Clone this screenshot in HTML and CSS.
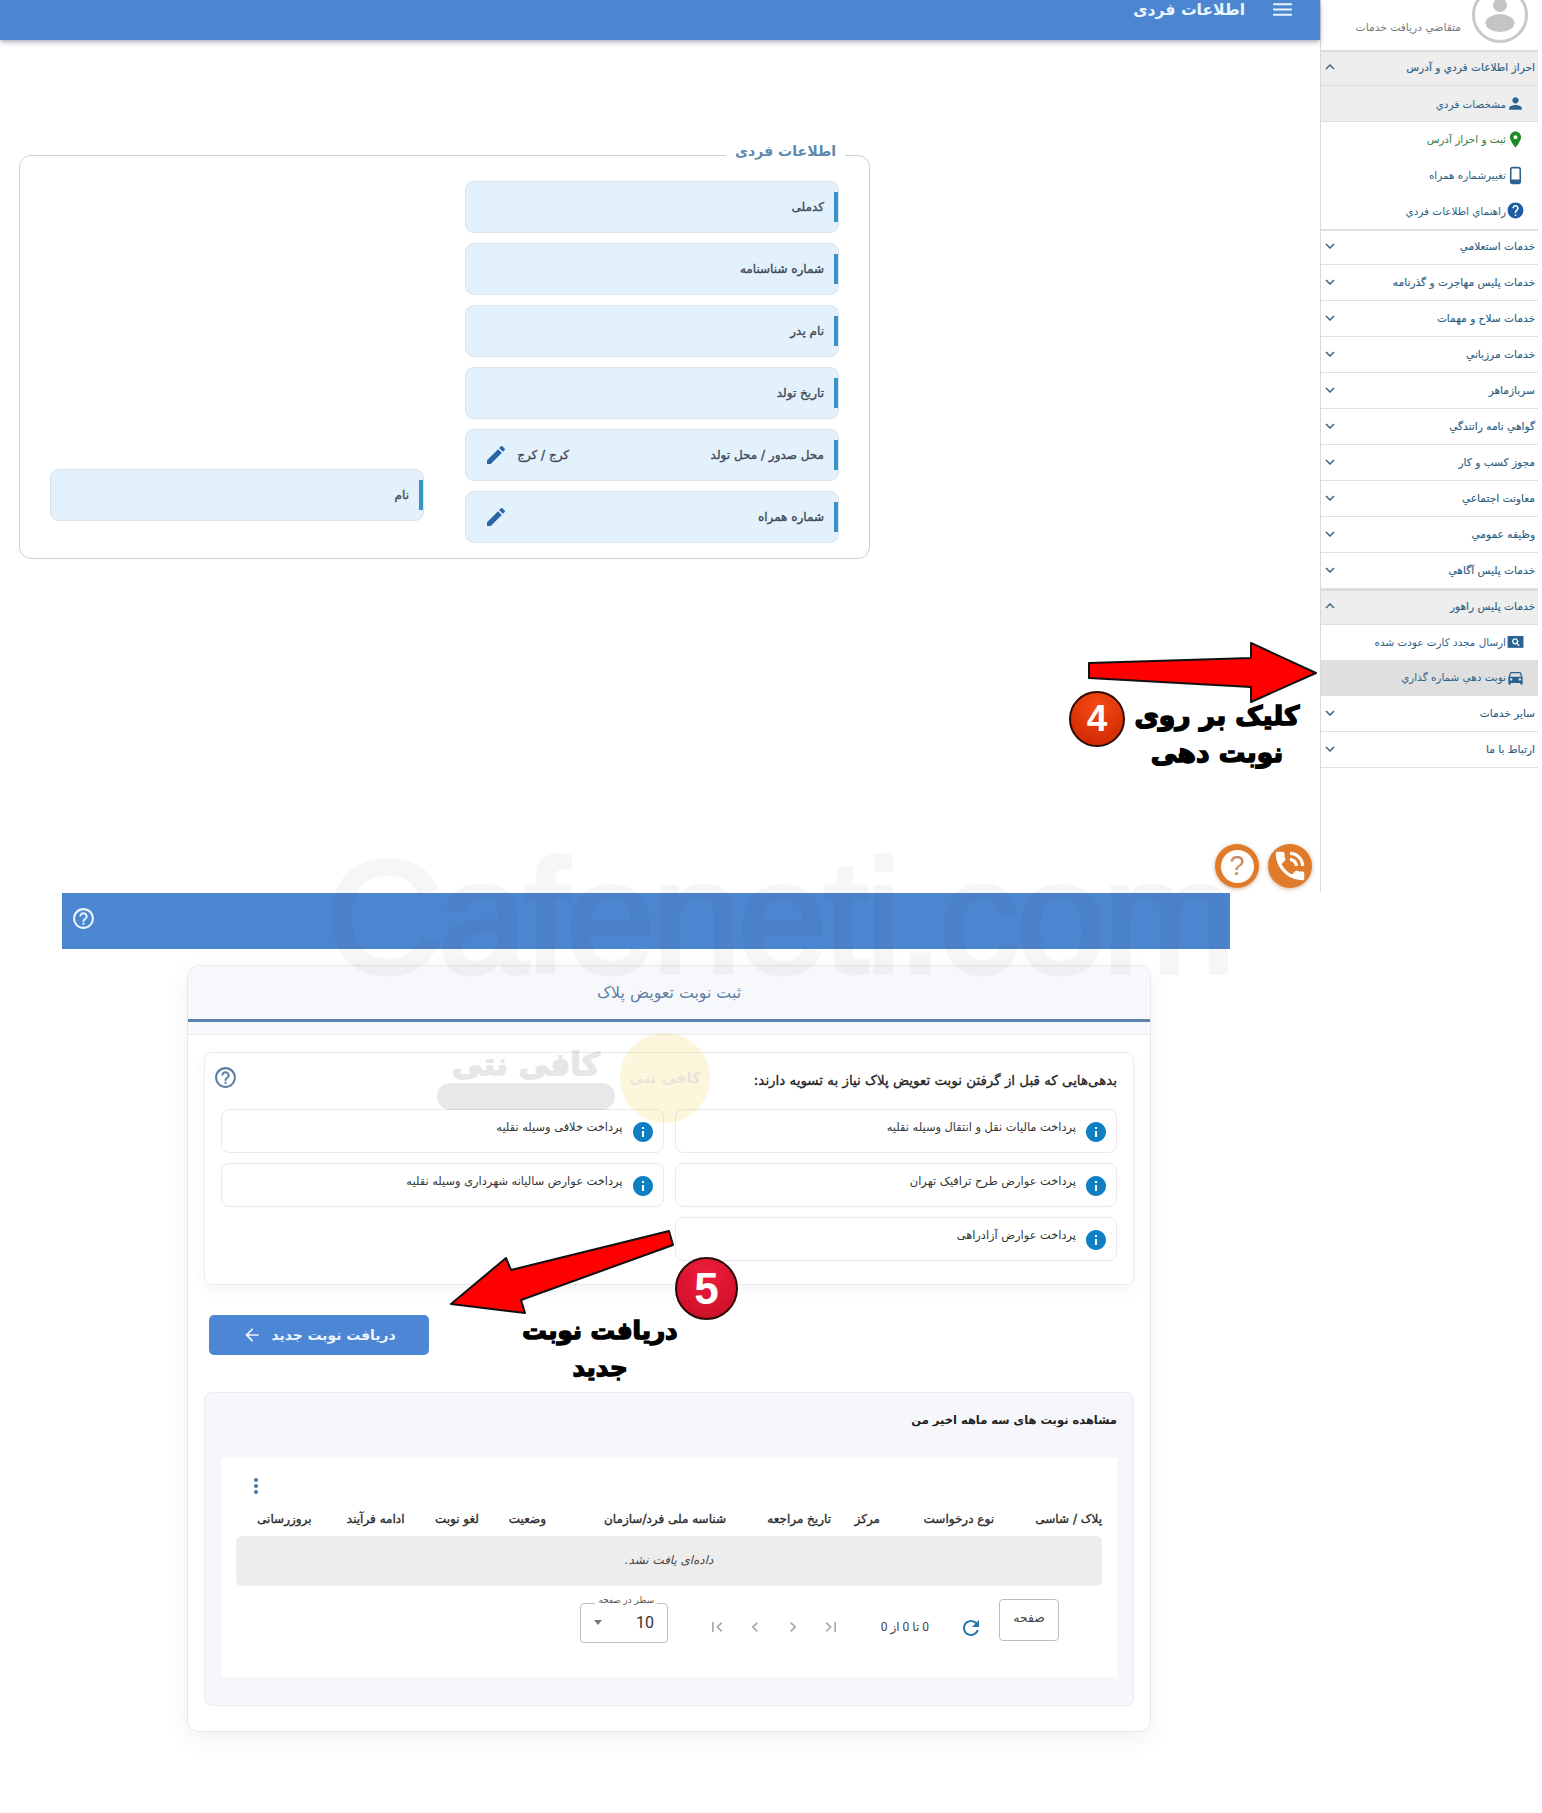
FILE: index.html
```html
<!DOCTYPE html>
<html lang="fa" dir="rtl">
<head>
<meta charset="utf-8">
<title>اطلاعات فردی</title>
<link rel="stylesheet" href="styles.css">
</head>
<body>
<svg class="defs" aria-hidden="true">
  <symbol id="i-person" viewBox="0 0 24 24"><path d="M12 12c2.21 0 4-1.79 4-4s-1.79-4-4-4-4 1.79-4 4 1.79 4 4 4zm0 2c-2.67 0-8 1.34-8 4v2h16v-2c0-2.66-5.33-4-8-4z"/></symbol>
  <symbol id="i-place" viewBox="0 0 24 24"><path d="M12 2C8.13 2 5 5.13 5 9c0 5.25 7 13 7 13s7-7.75 7-13c0-3.87-3.13-7-7-7zm0 9.5c-1.38 0-2.5-1.12-2.5-2.5s1.12-2.5 2.5-2.5 2.5 1.12 2.5 2.5-1.12 2.5-2.5 2.5z"/></symbol>
  <symbol id="i-mobile" viewBox="0 0 24 24"><path d="M16 1H8C6.34 1 5 2.34 5 4v16c0 1.66 1.34 3 3 3h8c1.66 0 3-1.34 3-3V4c0-1.66-1.34-3-3-3zm1 16H7V4c0-.55.45-1 1-1h8c.55 0 1 .45 1 1v13z"/></symbol>
  <symbol id="i-help" viewBox="0 0 24 24"><path d="M12 2C6.48 2 2 6.48 2 12s4.48 10 10 10 10-4.48 10-10S17.52 2 12 2zm1 17h-2v-2h2v2zm2.07-7.75l-.9.92C13.45 12.9 13 13.5 13 15h-2v-.5c0-1.1.45-2.1 1.17-2.83l1.24-1.26c.37-.36.59-.86.59-1.41 0-1.1-.9-2-2-2s-2 .9-2 2H8c0-2.21 1.79-4 4-4s4 1.79 4 4c0 .88-.36 1.68-.93 2.25z"/></symbol>
  <symbol id="i-search-box" viewBox="0 0 24 24"><path d="M2 5h20v15H2z"/><path fill="#fff" d="M11.5 7.8a4 4 0 0 1 3.2 6.4l2.6 2.6-1.1 1.1-2.6-2.6a4 4 0 1 1-2.1-7.5zm0 1.7a2.3 2.3 0 1 0 0 4.6 2.3 2.3 0 0 0 0-4.6z"/></symbol>
  <symbol id="i-car" viewBox="0 0 24 24"><path d="M18.92 6.01C18.72 5.42 18.16 5 17.5 5h-11c-.66 0-1.21.42-1.42 1.01L3 12v8c0 .55.45 1 1 1h1c.55 0 1-.45 1-1v-1h12v1c0 .55.45 1 1 1h1c.55 0 1-.45 1-1v-8l-2.08-5.99zM6.5 16c-.83 0-1.5-.67-1.5-1.5S5.67 13 6.5 13s1.5.67 1.5 1.5S7.33 16 6.5 16zm11 0c-.83 0-1.5-.67-1.5-1.5s.67-1.5 1.5-1.5 1.5.67 1.5 1.5-.67 1.5-1.5 1.5zM5 11l1.5-4.5h11L19 11H5z"/></symbol>
  <symbol id="i-down" viewBox="0 0 24 24"><path d="M16.59 8.59L12 13.17 7.41 8.59 6 10l6 6 6-6z"/></symbol>
  <symbol id="i-up" viewBox="0 0 24 24"><path d="M12 8l-6 6 1.41 1.41L12 10.83l4.59 4.58L18 14z"/></symbol>
  <symbol id="i-edit" viewBox="0 0 24 24"><path d="M3 17.25V21h3.75L17.81 9.94l-3.75-3.75L3 17.25zM20.71 7.04c.39-.39.39-1.02 0-1.41l-2.34-2.34a.9959.9959 0 0 0-1.41 0l-1.83 1.83 3.75 3.75 1.83-1.83z"/></symbol>
  <symbol id="i-help-o" viewBox="0 0 24 24"><path d="M11 18h2v-2h-2v2zm1-16C6.48 2 2 6.48 2 12s4.48 10 10 10 10-4.48 10-10S17.52 2 12 2zm0 18c-4.41 0-8-3.59-8-8s3.59-8 8-8 8 3.59 8 8-3.59 8-8 8zm0-14c-2.21 0-4 1.79-4 4h2c0-1.1.9-2 2-2s2 .9 2 2c0 2-3 1.75-3 5h2c0-2.25 3-2.5 3-5 0-2.21-1.79-4-4-4z"/></symbol>
  <symbol id="i-info" viewBox="0 0 24 24"><path d="M12 2C6.48 2 2 6.48 2 12s4.48 10 10 10 10-4.48 10-10S17.52 2 12 2zm1 15h-2v-6h2v6zm0-8h-2V7h2v2z"/></symbol>
  <symbol id="i-first" viewBox="0 0 24 24"><path d="M18.41 16.59L13.82 12l4.59-4.59L17 6l-6 6 6 6zM6 6h2v12H6z"/></symbol>
  <symbol id="i-last" viewBox="0 0 24 24"><path d="M5.59 7.41L10.18 12l-4.59 4.59L7 18l6-6-6-6zM16 6h2v12h-2z"/></symbol>
  <symbol id="i-prev" viewBox="0 0 24 24"><path d="M15.41 7.41L14 6l-6 6 6 6 1.41-1.41L10.83 12z"/></symbol>
  <symbol id="i-next" viewBox="0 0 24 24"><path d="M10 6L8.59 7.41 13.17 12l-4.58 4.59L10 18l6-6z"/></symbol>
</svg>

<div class="page">
  <section class="upper">
    <aside class="sidebar">
      <div class="profile">
        <svg class="avatar" viewBox="0 0 58 58"><circle cx="29" cy="29" r="26.5" fill="#fff" stroke="#c9c9c9" stroke-width="3"/><circle cx="29" cy="19" r="7" fill="#c4c4c4"/><ellipse cx="29" cy="37" rx="14.5" ry="9" fill="#c4c4c4"/></svg>
        <span class="profile-label">متقاضي دريافت خدمات</span>
      </div>
      <nav class="menu">
        <div class="group open"><span>احراز اطلاعات فردي و آدرس</span><svg class="chev"><use href="#i-up"/></svg></div>
        <div class="sub active"><svg class="sub-icon c-blue"><use href="#i-person"/></svg><span>مشخصات فردي</span></div>
        <div class="sub"><svg class="sub-icon c-green"><use href="#i-place"/></svg><span class="green">ثبت و احراز آدرس</span></div>
        <div class="sub"><svg class="sub-icon c-blue"><use href="#i-mobile"/></svg><span>تغييرشماره همراه</span></div>
        <div class="sub short"><svg class="sub-icon c-navy"><use href="#i-help"/></svg><span>راهنماي اطلاعات فردي</span></div>
        <div class="group after-sub"><span>خدمات استعلامي</span><svg class="chev"><use href="#i-down"/></svg></div>
        <div class="group"><span>خدمات پليس مهاجرت و گذرنامه</span><svg class="chev"><use href="#i-down"/></svg></div>
        <div class="group"><span>خدمات سلاح و مهمات</span><svg class="chev"><use href="#i-down"/></svg></div>
        <div class="group"><span>خدمات مرزباني</span><svg class="chev"><use href="#i-down"/></svg></div>
        <div class="group"><span>سربازماهر</span><svg class="chev"><use href="#i-down"/></svg></div>
        <div class="group"><span>گواهي نامه رانندگي</span><svg class="chev"><use href="#i-down"/></svg></div>
        <div class="group"><span>مجوز كسب و كار</span><svg class="chev"><use href="#i-down"/></svg></div>
        <div class="group"><span>معاونت اجتماعي</span><svg class="chev"><use href="#i-down"/></svg></div>
        <div class="group"><span>وظيفه عمومي</span><svg class="chev"><use href="#i-down"/></svg></div>
        <div class="group"><span>خدمات پليس آگاهي</span><svg class="chev"><use href="#i-down"/></svg></div>
        <div class="group open"><span>خدمات پليس راهور</span><svg class="chev"><use href="#i-up"/></svg></div>
        <div class="sub short"><svg class="sub-icon c-blue"><use href="#i-search-box"/></svg><span>ارسال مجدد كارت عودت شده</span></div>
        <div class="sub selected"><svg class="sub-icon c-blue"><use href="#i-car"/></svg><span>نوبت دهي شماره گذاري</span></div>
        <div class="group"><span>ساير خدمات</span><svg class="chev"><use href="#i-down"/></svg></div>
        <div class="group"><span>ارتباط با ما</span><svg class="chev"><use href="#i-down"/></svg></div>
      </nav>
    </aside>

    <main class="main">
      <header class="topbar">
        <svg class="burger" viewBox="0 0 24 24"><path d="M3 18h18v-2H3v2zm0-5h18v-2H3v2zm0-7v2h18V6H3z"/></svg>
        <h1 class="topbar-title">اطلاعات فردی</h1>
      </header>
      <div class="fieldset">
        <div class="legend">اطلاعات فردی</div>
        <div class="field-col">
          <div class="field"><i class="bar"></i><span class="label">کدملی</span></div>
          <div class="field"><i class="bar"></i><span class="label">شماره شناسنامه</span></div>
          <div class="field"><i class="bar"></i><span class="label">نام پدر</span></div>
          <div class="field"><i class="bar"></i><span class="label">تاریخ تولد</span></div>
          <div class="field"><i class="bar"></i><span class="label">محل صدور / محل تولد</span><span class="value">کرج / کرج</span><svg class="pencil"><use href="#i-edit"/></svg></div>
          <div class="field"><i class="bar"></i><span class="label">شماره همراه</span><span class="value"></span><svg class="pencil"><use href="#i-edit"/></svg></div>
        </div>
        <div class="field-col col-side">
          <div class="field"><i class="bar"></i><span class="label">نام</span></div>
        </div>
      </div>
      <div class="fabs">
        <span class="fab"><span class="fab-q">?</span></span>
        <span class="fab"><svg class="fab-phone" viewBox="0 0 24 24"><path d="M20 15.5c-1.25 0-2.45-.2-3.57-.57-.35-.11-.74-.03-1.02.24l-2.2 2.2c-2.83-1.44-5.15-3.75-6.59-6.59l2.2-2.21c.28-.26.36-.65.25-1C8.7 6.45 8.5 5.25 8.5 4c0-.55-.45-1-1-1H4c-.55 0-1 .45-1 1 0 9.39 7.61 17 17 17 .55 0 1-.45 1-1v-3.5c0-.55-.45-1-1-1zM19 12h2c0-4.97-4.03-9-9-9v2c3.87 0 7 3.13 7 7zm-4 0h2c0-2.76-2.24-5-5-5v2c1.66 0 3 1.34 3 3z"/></svg></span>
      </div>
    </main>
  </section>

  <section class="lower">
    <div class="banner"><svg class="banner-help"><use href="#i-help-o"/></svg></div>

    <div class="card">
      <div class="card-head"><h2 class="card-title">ثبت نوبت تعویض پلاک</h2></div>
      <div class="card-strip"></div>
      <div class="card-body">
        <div class="panel">
          <div class="panel-head">
            <p class="panel-title">بدهی‌هایی که قبل از گرفتن نوبت تعویض پلاک نیاز به تسویه دارند:</p>
            <svg class="panel-help"><use href="#i-help-o"/></svg>
          </div>
          <div class="debts">
            <div class="debt"><svg class="info"><use href="#i-info"/></svg><span>پرداخت مالیات نقل و انتقال وسیله نقلیه</span></div>
            <div class="debt"><svg class="info"><use href="#i-info"/></svg><span>پرداخت خلافی وسیله نقلیه</span></div>
            <div class="debt"><svg class="info"><use href="#i-info"/></svg><span>پرداخت عوارض طرح ترافیک تهران</span></div>
            <div class="debt"><svg class="info"><use href="#i-info"/></svg><span>پرداخت عوارض سالیانه شهرداری وسیله نقلیه</span></div>
            <div class="debt"><svg class="info"><use href="#i-info"/></svg><span>پرداخت عوارض آزادراهی</span></div>
          </div>
        </div>

        <div class="action-row">
          <button class="primary" type="button"><span>دریافت نوبت جدید</span><svg class="btn-arrow" viewBox="0 0 24 24"><path d="M20 11H7.83l5.59-5.59L12 4l-8 8 8 8 1.41-1.41L7.83 13H20v-2z"/></svg></button>
        </div>

        <div class="history">
          <h3 class="history-title">مشاهده نوبت های سه ماهه اخیر من</h3>
          <div class="table-box">
            <div class="kebab-row"><svg class="kebab" viewBox="0 0 24 24"><path d="M12 8c1.1 0 2-.9 2-2s-.9-2-2-2-2 .9-2 2 .9 2 2 2zm0 2c-1.1 0-2 .9-2 2s.9 2 2 2 2-.9 2-2-.9-2-2-2zm0 6c-1.1 0-2 .9-2 2s.9 2 2 2 2-.9 2-2-.9-2-2-2z"/></svg></div>
            <div class="thead">
              <span>پلاک / شاسی</span><span>نوع درخواست</span><span>مرکز</span><span>تاریخ مراجعه</span><span>شناسه ملی فرد/سازمان</span><span>وضعیت</span><span>لغو نوبت</span><span>ادامه فرآیند</span><span>بروزرسانی</span>
            </div>
            <div class="empty">داده‌ای یافت نشد.</div>
            <div class="pager">
              <span class="page-box">صفحه</span>
              <svg class="refresh" viewBox="0 0 24 24"><path d="M17.65 6.35C16.2 4.9 14.21 4 12 4c-4.42 0-7.99 3.58-7.99 8s3.57 8 7.99 8c3.73 0 6.84-2.55 7.73-6h-2.08c-.82 2.33-3.04 4-5.65 4-3.31 0-6-2.69-6-6s2.69-6 6-6c1.66 0 3.14.69 4.22 1.78L13 11h7V4l-2.35 2.35z"/></svg>
              <span class="range">0 تا 0 از 0</span>
              <svg class="pg pg-first"><use href="#i-last"/></svg>
              <svg class="pg"><use href="#i-next"/></svg>
              <svg class="pg"><use href="#i-prev"/></svg>
              <svg class="pg"><use href="#i-first"/></svg>
              <div class="select">
                <span class="select-label">سطر در صفحه</span>
                <span class="select-value">10</span>
                <i class="caret"></i>
              </div>
            </div>
          </div>
        </div>
      </div>
    </div>
  </section>

  <div class="watermark">Cafeneti.com</div>
  <div class="logo-mark">
    <span class="logo-name">کافی نتی</span>
    <span class="logo-pill"></span>
    <span class="logo-disc">کافی نتی</span>
  </div>

  <svg class="arrow arrow-four" viewBox="0 0 240 70"><polygon points="3,23 165,18 165,3 230,33 165,62 165,47 3,38" fill="#f00" stroke="#111" stroke-width="2" stroke-linejoin="round"/></svg>
  <span class="badge badge-four">4</span>
  <div class="note note-four">کلیک بر روی<br>نوبت دهی</div>

  <svg class="arrow arrow-five" viewBox="0 0 230 90"><polygon points="222,3 226,17 74,72 78,85 4,76 59,30 64,42" fill="#f00" stroke="#111" stroke-width="2" stroke-linejoin="round"/></svg>
  <span class="badge badge-five">5</span>
  <div class="note note-five">دریافت نوبت<br>جدید</div>
</div>
</body>
</html>
```
FILE: styles.css
```css
* { box-sizing: border-box; }
html, body { margin: 0; padding: 0; background: #fff; }
body { font-family: "DejaVu Sans", "Noto Sans", sans-serif; color: #333; }
.defs { display: none; }
svg { display: block; fill: currentColor; flex: none; }
h1, h2, h3, p { margin: 0; font-weight: inherit; font-size: inherit; }

.page { position: relative; width: 1542px; height: 1813px; overflow: hidden; }

/* upper */
.upper { display: flex; height: 892px; }
.sidebar { width: 218px; margin-inline-start: 4px; border-inline-end: 1px solid #d9d9d9; flex: none; }
.profile { height: 50px; display: flex; gap: 10px; overflow: hidden; padding-inline-start: 9px; }
.avatar { width: 58px; height: 58px; margin-top: -14px; }
.profile-label { font-size: 10.7px; color: #777; margin-top: 21px; }
.group { height: 36px; display: flex; align-items: center; justify-content: space-between; padding: 0 3px 1px 0; font-size: 10.6px; color: #2d5f86; border-bottom: 1px solid #dfdfdf; -webkit-text-stroke: .15px #2d5f86; }
.group.open { background: #eeeeee; border-top: 2px solid #dcdcdc; border-bottom: 1px solid #dcdcdc; padding-bottom: 4px; }
.group.after-sub { border-top: 2px solid #dfdfdf; padding-bottom: 4px; }
.chev { width: 18px; height: 18px; color: #3f5f78; }
.sub { height: 36px; display: flex; align-items: center; padding: 0 13px 2px 0; font-size: 10.4px; color: #2d5f86; }
.sub.short { height: 35px; }
.sub.active { background: #eeeeee; border-bottom: 1px solid #e2e2e2; padding-bottom: 0; }
.sub.selected { background: #dfdfdf; }
.sub-icon { width: 19px; height: 19px; }
.green { color: #2f7a3a; }
.c-blue { color: #2a6392; }
.c-green { color: #1f8a22; }
.c-navy { color: #1f5ca3; }

.main { position: relative; width: 1320px; flex: none; }
.topbar { height: 40px; background: #4d86d0; box-shadow: 0 2px 5px rgba(60, 70, 90, .45); display: flex; align-items: center; gap: 25px; padding: 0 25px 21px 0; color: #e9f6ff; }
.burger { width: 25px; height: 25px; }
.topbar-title { font-size: 15.6px; font-weight: 700; }

.fieldset { position: relative; display: flex; justify-content: space-between; width: 851px; height: 404px; margin: 115px 450px 0 0; padding: 25px 30px 0; border: 1px solid #cfcfcf; border-radius: 12px; }
.legend { position: absolute; top: -13px; right: 24px; padding: 0 9px; background: #fff; font-size: 14.1px; font-weight: 700; color: #5d8aac; }
.field-col { width: 374px; display: flex; flex-direction: column; gap: 10px; }
.col-side { padding-top: 288px; }
.field { height: 52px; display: flex; align-items: center; background: #e3f1fd; border: 1px solid #d7e2ea; border-radius: 9px; }
.bar { width: 4px; height: 30px; background: #3b92c8; flex: none; }
.label { font-size: 12px; color: #414a55; -webkit-text-stroke: .35px #414a55; margin-inline-start: 10px; width: 255px; flex: none; }
.col-side .label { width: auto; }
.value { flex: 1; font-size: 12px; color: #414a55; -webkit-text-stroke: .35px #414a55; }
.pencil { width: 24px; height: 24px; color: #2a65a5; margin-inline-end: 18px; }

.fabs { position: absolute; left: 1215px; top: 844px; display: flex; flex-direction: row-reverse; gap: 9px; }
.fab { width: 44px; height: 44px; border-radius: 50%; background: #e17b2c; box-shadow: 0 1px 4px rgba(120, 70, 20, .4); display: flex; align-items: center; justify-content: center; }
.fab-q { width: 33px; height: 33px; border-radius: 50%; background: #fff; color: #c78b5e; font: 400 27px/33px "Liberation Sans", sans-serif; text-align: center; }
.fab-phone { width: 38px; height: 38px; color: #fff; }

/* lower */
.lower { padding-top: 1px; }
.banner { width: 1168px; height: 56px; margin-inline-start: 312px; background: #4d86d0; display: flex; align-items: center; padding-inline-start: 1137px; color: #e9f4fb; }
.banner-help { width: 25px; height: 25px; margin: -5px -3px 0 0; }

.card { width: 964px; height: 767px; margin: 16px 391px 0 0; border: 1px solid #e6e8ec; border-radius: 12px; box-shadow: 0 8px 22px rgba(60, 70, 90, .07); }
.card-head { height: 56px; background: #f6f8fb; border-radius: 12px 12px 0 0; border-bottom: 3px solid #5b84ad; display: flex; align-items: center; justify-content: center; }
.card-title { font-size: 15.8px; color: #5e7fa3; }
.card-strip { height: 13px; background: #f6f8fb; border-bottom: 1px solid #e8ebee; }
.card-body { padding: 17px 16px 0 16px; }

.panel { height: 233px; border: 1px solid #e9ebee; border-radius: 8px; box-shadow: 0 6px 14px rgba(60, 70, 90, .05); padding: 0 16px; }
.panel-head { height: 56px; display: flex; justify-content: space-between; align-items: center; }
.panel-title { font-size: 13.4px; color: #222; -webkit-text-stroke: .3px #222; margin-top: -2px; }
.panel-help { width: 25px; height: 25px; color: #5b7fa6; margin: -8px 0 0 -8px; }
.debts { display: grid; grid-template-columns: 1fr 1fr; gap: 10px 11px; }
.debt { height: 44px; border: 1px solid #e8eaed; border-radius: 8px; display: flex; gap: 8px; padding: 8px 8px 0 0; font-size: 11.4px; color: #333; }
.info { width: 24px; height: 24px; color: #0d7fc2; margin-top: 2px; }
.debt span { margin-top: 2px; }

.action-row { display: flex; justify-content: flex-end; padding: 30px 0 0 5px; }
.primary { width: 220px; height: 40px; border: 0; border-radius: 5px; background: #4d86d5; color: #edf5ff; display: flex; align-items: center; justify-content: center; gap: 9px; font: 700 13.9px "DejaVu Sans", sans-serif; }
.btn-arrow { width: 20px; height: 20px; }

.history { height: 314px; margin-top: 37px; background: #f5f7fa; border: 1px solid #e9ebee; border-radius: 8px; padding: 0 16px; }
.history-title { height: 65px; display: flex; align-items: center; padding-bottom: 12px; font-size: 11.5px; font-weight: 700; color: #222; }
.table-box { height: 219px; background: #fff; padding: 0 15px; }
.kebab-row { height: 44px; display: flex; justify-content: flex-end; align-items: center; padding-inline-end: 8px; }
.kebab { width: 24px; height: 24px; color: #3f77a6; margin-top: 12px; }
.thead { height: 34px; display: grid; grid-template-columns: 108px 114px 49px 105px 180px 67px 74.5px 93px 75.5px; align-items: center; font-size: 12px; color: #2b2b2b; -webkit-text-stroke: .35px #2b2b2b; white-space: nowrap; }
.empty { height: 50px; background: #ededed; border-radius: 6px; display: flex; align-items: center; justify-content: center; padding-bottom: 2px; font-size: 11.9px; font-style: italic; color: #444; }
.pager { display: flex; align-items: flex-start; padding-inline-start: 43px; }
.page-box { width: 60px; height: 42px; margin-top: 13px; border: 1px solid #bdbdbd; border-radius: 4px; display: flex; align-items: center; justify-content: center; padding-bottom: 5px; font-size: 12.4px; color: #444; }
.refresh { width: 24px; height: 24px; margin: 30px 16px 0 0; color: #2a77ab; }
.range { width: 49px; margin: 34px 30px 0 0; font: 12px "Roboto", "DejaVu Sans", sans-serif; color: #444; white-space: nowrap; }
.pg { width: 20px; height: 20px; margin: 31px 18px 0 0; color: #a8a8a8; }
.pg-first { margin-right: 39px; }
.select { position: relative; width: 88px; height: 40px; margin: 17px 39px 0 0; border: 1px solid #bdbdbd; border-radius: 4px; display: flex; align-items: center; justify-content: space-between; padding: 0 13px 2px; }
.select-label { position: absolute; top: -9px; right: 10px; padding: 0 3px; background: #fff; font-size: 8.8px; color: #555; white-space: nowrap; }
.select-value { font: 16px "Roboto", sans-serif; color: #333; }
.caret { width: 0; height: 0; border: 4px solid transparent; border-top: 5px solid #777; border-bottom: 0; }

/* overlays */
.watermark { position: absolute; left: 326px; top: 837px; direction: ltr; font: 160px/1 "Liberation Sans", sans-serif; letter-spacing: -3px; color: #000; -webkit-text-stroke: 5px #000; opacity: .03; white-space: nowrap; pointer-events: none; }
.logo-mark { position: absolute; left: 437px; top: 1040px; width: 275px; height: 85px; opacity: .14; pointer-events: none; }
.logo-name { position: absolute; left: 0; top: 4px; width: 178px; text-align: center; font-size: 31px; font-weight: 700; color: #555; line-height: 40px; -webkit-text-stroke: 1.5px #555; }
.logo-pill { position: absolute; left: 0; top: 43px; width: 178px; height: 27px; border-radius: 14px; background: #666; }
.logo-disc { position: absolute; left: 183px; top: -7px; width: 90px; height: 90px; border-radius: 50%; background: #f1c40f; color: #5a4300; font-size: 15px; font-weight: 700; display: flex; align-items: center; justify-content: center; }

.arrow { position: absolute; overflow: visible; }
.arrow-four { left: 1086px; top: 640px; width: 240px; height: 70px; }
.arrow-five { left: 447px; top: 1228px; width: 230px; height: 90px; }
.badge { position: absolute; border-radius: 50%; border: 2px solid #2a0b05; color: #fff; display: flex; align-items: center; justify-content: center; font-family: "Liberation Sans", sans-serif; font-weight: 700; }
.badge-four { left: 1069px; top: 691px; width: 56px; height: 56px; font-size: 37px; background: radial-gradient(circle at 50% 25%, #f64a12, #c92400); }
.badge-five { left: 675px; top: 1257px; width: 63px; height: 63px; font-size: 44px; background: radial-gradient(circle at 50% 25%, #ef1d3c, #c70d26); }
.note { position: absolute; color: #000; font-weight: 700; text-align: center; white-space: nowrap; -webkit-text-stroke: 1.5px #000; }
.note-four { left: 1117px; top: 697px; width: 200px; font-size: 26.5px; line-height: 37px; }
.note-five { left: 500px; top: 1312px; width: 200px; font-size: 24.5px; line-height: 37px; }
```
